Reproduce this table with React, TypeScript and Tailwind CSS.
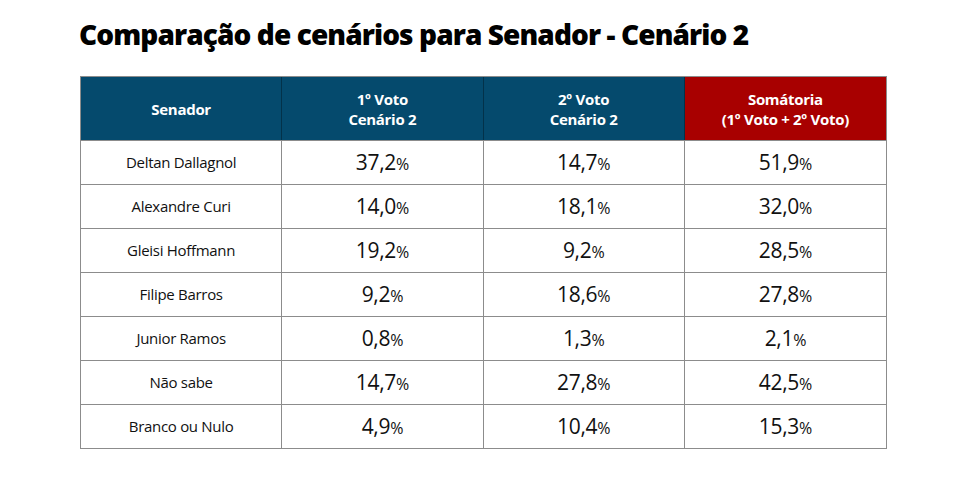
const rows: [string, string, string, string][] = [
  ["Deltan Dallagnol", "37,2", "14,7", "51,9"],
  ["Alexandre Curi", "14,0", "18,1", "32,0"],
  ["Gleisi Hoffmann", "19,2", "9,2", "28,5"],
  ["Filipe Barros", "9,2", "18,6", "27,8"],
  ["Junior Ramos", "0,8", "1,3", "2,1"],
  ["Não sabe", "14,7", "27,8", "42,5"],
  ["Branco ou Nulo", "4,9", "10,4", "15,3"],
];

function Pct({ v }: { v: string }) {
  return (
    <span className="text-[21px] tracking-[-0.3px] text-[#111]">
      {v}
      <span className="text-[16px]">%</span>
    </span>
  );
}

export default function App() {
  return (
    <div className="w-[968px] h-[484px] bg-white font-['Open_Sans',sans-serif]">
      <div className="pl-[79px] pt-[13px]">
        <h1 className="text-[28px] leading-[42px] font-extrabold tracking-[-0.9px] text-black">
          Comparação de cenários para Senador - Cenário 2
        </h1>
      </div>
      <div className="ml-[80px] mt-[21px] w-[807px] border border-[#8c8c8c]">
        <div className="grid grid-cols-4 h-[63px] text-white font-bold text-[15px] leading-[20px] tracking-[-0.3px] text-center">
          <div className="flex items-center justify-center bg-[#054a6d] border-r border-[#03324a]">Senador</div>
          <div className="flex items-center justify-center bg-[#054a6d] border-r border-[#03324a]">
            1º Voto
            <br />
            Cenário 2
          </div>
          <div className="flex items-center justify-center bg-[#054a6d] border-r border-[#03324a]">
            2º Voto
            <br />
            Cenário 2
          </div>
          <div className="flex items-center justify-center bg-[#a80000]">
            Somátoria
            <br />
            (1º Voto + 2º Voto)
          </div>
        </div>
        {rows.map((r) => (
          <div key={r[0]} className="grid grid-cols-4 h-[44px] border-t border-[#8c8c8c] text-center">
            <div className="flex items-center justify-center border-r border-[#8c8c8c] text-[15px] tracking-[-0.3px] text-[#111]">
              {r[0]}
            </div>
            <div className="flex items-center justify-center border-r border-[#8c8c8c]">
              <Pct v={r[1]} />
            </div>
            <div className="flex items-center justify-center border-r border-[#8c8c8c]">
              <Pct v={r[2]} />
            </div>
            <div className="flex items-center justify-center">
              <Pct v={r[3]} />
            </div>
          </div>
        ))}
      </div>
    </div>
  );
}
